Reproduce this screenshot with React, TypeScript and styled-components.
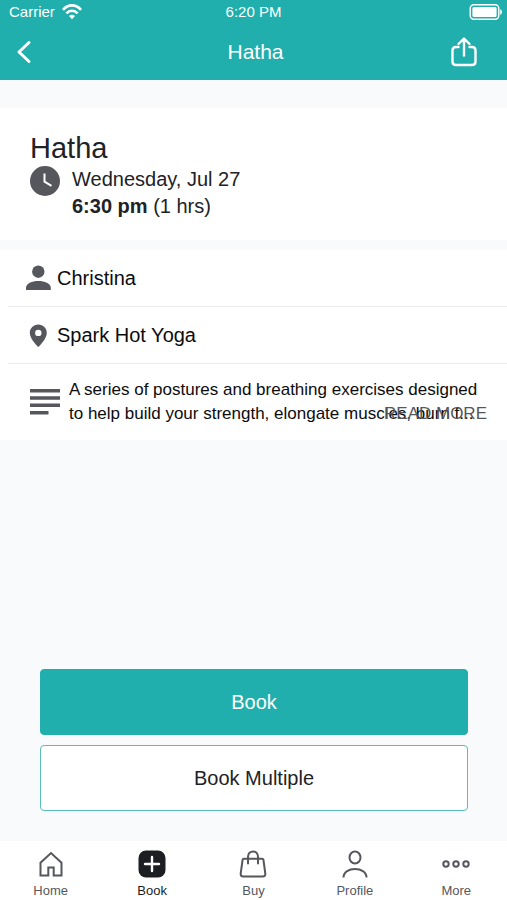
import React from "react";
import styled, { createGlobalStyle } from "styled-components";

const GlobalStyle = createGlobalStyle`
  *, *::before, *::after { box-sizing: border-box; }
  body { margin: 0; background: #f8fafc; }
  body, button { font-family: "Liberation Sans", Arial, sans-serif; }
  h1, h2, p { margin: 0; font-weight: 400; }
  svg { display: block; flex: none; }
`;

const TEAL = "#20afac";
const GREY = "#55575d";

const Screen = styled.div`
  display: flex;
  flex-direction: column;
  min-height: 100vh;
  color: #212226;
`;

const Header = styled.header`
  background: ${TEAL};
  color: #fff;
`;

const StatusBar = styled.div`
  display: grid;
  grid-template-columns: 1fr auto 1fr;
  align-items: center;
  height: 24px;
  padding: 0 4px;
  font-size: 15px;
  line-height: 24px;
`;

const Carrier = styled.div`
  display: flex;
  align-items: center;
  gap: 7px;
  padding-left: 5px;
`;

const Battery = styled.div`
  justify-self: end;
`;

const NavBar = styled.div`
  display: grid;
  grid-template-columns: 1fr auto 1fr;
  align-items: center;
  height: 56px;
  padding: 0 10px 0 14px;
`;

const NavTitle = styled.h1`
  font-size: 21px;
  line-height: 28px;
`;

const IconButton = styled.button<{ $end?: boolean }>`
  justify-self: ${(p) => (p.$end ? "end" : "start")};
  padding: ${(p) => (p.$end ? "0 18px 0 0" : "0")};
  border: 0;
  background: none;
  color: inherit;
  cursor: pointer;
`;

const Summary = styled.section`
  margin-top: 28px;
  padding: 22px 30px 20px;
  background: #fff;
`;

const ClassName = styled.h2`
  font-size: 29px;
  line-height: 36px;
`;

const Schedule = styled.div`
  display: flex;
  gap: 12px;
  font-size: 20px;
  line-height: 27px;
`;

const Details = styled.section`
  margin-top: 10px;
  padding-left: 8px;
  background: #fff;
`;

const DetailRow = styled.div`
  display: flex;
  align-items: center;
  gap: 4px;
  height: 57px;
  padding: 0 15px;
  border-bottom: 1px solid #e9ebee;
  color: #0c0c0e;
  font-size: 20px;
  line-height: 28px;
`;

const DescriptionRow = styled.div`
  position: relative;
  display: flex;
  align-items: center;
  gap: 9px;
  min-height: 76px;
  padding: 14px 20px 14px 22px;
`;

const Description = styled.p`
  flex: 1;
  color: #0c0c0e;
  font-size: 17px;
  line-height: 24px;
`;

const ReadMore = styled.button`
  position: absolute;
  right: 20px;
  bottom: 14px;
  padding: 0;
  border: 0;
  background: none;
  color: ${GREY};
  font-size: 17px;
  line-height: 24px;
  cursor: pointer;
`;

const Actions = styled.div`
  display: flex;
  flex-direction: column;
  gap: 10px;
  margin-top: auto;
  padding: 30px 39px 30px 40px;
`;

const ActionButton = styled.button<{ $primary?: boolean }>`
  height: 66px;
  border: 1px solid ${(p) => (p.$primary ? TEAL : "#58bdb8")};
  border-radius: 4px;
  background: ${(p) => (p.$primary ? TEAL : "#fff")};
  color: ${(p) => (p.$primary ? "#fff" : "#212226")};
  font-size: 20px;
  cursor: pointer;
`;

const TabBar = styled.nav`
  display: grid;
  grid-template-columns: repeat(5, 1fr);
  height: 59px;
  background: #fff;
`;

const Tab = styled.a<{ $active?: boolean }>`
  display: flex;
  flex-direction: column;
  align-items: center;
  gap: 4px;
  padding-top: 8px;
  color: ${(p) => (p.$active ? "#1c1d21" : GREY)};
  font-size: 13px;
  line-height: 16px;
  text-decoration: none;
`;

const line = {
  fill: "none",
  stroke: "currentColor",
  strokeWidth: 2,
  strokeLinecap: "round",
  strokeLinejoin: "round",
} as const;

const WifiIcon = () => (
  <svg width="20" height="16" viewBox="0 0 20 16" fill="none" stroke="#fff" strokeWidth="2.6">
    <path d="M1 5.8C6-.1 14-.1 19 5.8M4.4 9.3c3.1-3.5 8.1-3.5 11.2 0" />
    <path d="M10 15.200l-3-3.200c1.700-1.600 4.300-1.600 6 0z" fill="#fff" stroke="none" />
  </svg>
);

const BatteryIcon = () => (
  <svg width="34" height="16" viewBox="0 0 34 16">
    <rect x="1.2" y="0.8" width="28.6" height="14.4" rx="3.6" fill="none" stroke="#fff" strokeWidth="1.4" />
    <rect x="3.4" y="3" width="24.2" height="10" rx="1.5" fill="#fff" />
    <path d="M31.2 5.2c2.3.7 2.3 4.9 0 5.6z" fill="#fff" />
  </svg>
);

const BackIcon = () => (
  <svg width="20" height="26" viewBox="0 0 20 26" {...line} strokeWidth={3}>
    <path d="M15 3.5 5 13l10 9.5" />
  </svg>
);

const ShareIcon = () => (
  <svg width="30" height="32" viewBox="0 0 30 32" {...line} strokeWidth={2.4}>
    <path d="M9.5 11H7q-3.5 0-3.5 3.5v11Q3.5 29 7 29h16q3.5 0 3.5-3.5v-11Q26.5 11 23 11h-2.500M15 19.5V3M9.5 8 15 2.500 20.500 8" />
  </svg>
);

const ClockIcon = () => (
  <svg width="30" height="30" viewBox="0 0 30 30">
    <circle cx="15" cy="15" r="15" fill={GREY} />
    <path d="M14.5 7.5v8.200l7 4.200" fill="none" stroke="#fff" strokeWidth="2" />
  </svg>
);

const PersonIcon = () => (
  <svg width="30" height="30" viewBox="0 0 30 30" fill={GREY}>
    <circle cx="15.3" cy="8.7" r="6.2" />
    <path d="M3 27v-2.200C3 20.500 9 18 15.300 18s12.500 2.500 12.500 6.800V27z" />
  </svg>
);

const PinIcon = () => (
  <svg width="30" height="30" viewBox="0 0 30 30" fill={GREY}>
    <path
      fillRule="evenodd"
      d="M15.3 4.5c-4.800 0-8.500 3.700-8.500 8.400 0 6.100 8.500 14.100 8.500 14.100s8.500-8 8.500-14.100c0-4.700-3.700-8.400-8.500-8.400zm0 5.200a3.200 3.200 0 1 1 0 6.400 3.200 3.200 0 0 1 0-6.400z"
    />
  </svg>
);

const NotesIcon = () => (
  <svg width="30" height="28" viewBox="0 0 30 28" fill={GREY}>
    <path d="M0 1h30v3.500H0zM0 8.300h30v3.500H0zM0 15.600h30v3.500H0zM0 23h18.500v3.500H0z" />
  </svg>
);

const HomeIcon = () => (
  <svg width="30" height="30" viewBox="0 0 30 30" {...line} strokeLinejoin="miter">
    <path d="M4.5 26.5V13.800L15 4l10.500 9.800v12.700h-7.800v-8h-5.400v8z" />
  </svg>
);

const BookIcon = () => (
  <svg width="30" height="30" viewBox="0 0 30 30">
    <rect x="1.5" y="1.5" width="27" height="27" rx="7.5" fill="#1d1e22" />
    <path d="M15 8v14M8 15h14" fill="none" stroke="#fff" strokeWidth="2.4" strokeLinecap="round" />
  </svg>
);

const BagIcon = () => (
  <svg width="30" height="30" viewBox="0 0 30 30" {...line}>
    <path d="M5.8 9.7h18.400q1 0 1.200 1l1.900 13.800q.3 3-2.500 3H5.200q-2.800 0-2.500-3L4.600 10.700q.2-1 1.200-1zM10 14.500V8c0-7.500 10-7.500 10 0v6.500" />
  </svg>
);

const ProfileIcon = () => (
  <svg width="30" height="30" viewBox="0 0 30 30" {...line} strokeLinecap="butt">
    <ellipse cx="15" cy="8.5" rx="5.5" ry="6" />
    <path d="M3.5 28.500c0-11.300 23-11.300 23 0" />
  </svg>
);

const MoreIcon = () => (
  <svg width="30" height="30" viewBox="0 0 30 30" {...line}>
    <circle cx="5" cy="15" r="2.7" />
    <circle cx="15" cy="15" r="2.7" />
    <circle cx="25" cy="15" r="2.7" />
  </svg>
);

const tabs = [
  { label: "Home", Icon: HomeIcon },
  { label: "Book", Icon: BookIcon, active: true },
  { label: "Buy", Icon: BagIcon },
  { label: "Profile", Icon: ProfileIcon },
  { label: "More", Icon: MoreIcon },
];

export default function App() {
  return (
    <Screen>
      <GlobalStyle />
      <Header>
        <StatusBar>
          <Carrier>
            Carrier
            <WifiIcon />
          </Carrier>
          <span>6:20 PM</span>
          <Battery>
            <BatteryIcon />
          </Battery>
        </StatusBar>
        <NavBar>
          <IconButton aria-label="Back">
            <BackIcon />
          </IconButton>
          <NavTitle>Hatha</NavTitle>
          <IconButton $end aria-label="Share">
            <ShareIcon />
          </IconButton>
        </NavBar>
      </Header>

      <Summary>
        <ClassName>Hatha</ClassName>
        <Schedule>
          <ClockIcon />
          <div>
            <p>Wednesday, Jul 27</p>
            <p>
              <strong>6:30 pm</strong> (1 hrs)
            </p>
          </div>
        </Schedule>
      </Summary>

      <Details>
        <DetailRow>
          <PersonIcon />
          Christina
        </DetailRow>
        <DetailRow>
          <PinIcon />
          Spark Hot Yoga
        </DetailRow>
        <DescriptionRow>
          <NotesIcon />
          <Description>
            A series of postures and breathing exercises designed to help build your strength, elongate muscles, burn f...
          </Description>
          <ReadMore>READ MORE</ReadMore>
        </DescriptionRow>
      </Details>

      <Actions>
        <ActionButton $primary>Book</ActionButton>
        <ActionButton>Book Multiple</ActionButton>
      </Actions>

      <TabBar>
        {tabs.map(({ label, Icon, active }) => (
          <Tab key={label} href="#" $active={active} aria-current={active ? "page" : undefined}>
            <Icon />
            {label}
          </Tab>
        ))}
      </TabBar>
    </Screen>
  );
}
